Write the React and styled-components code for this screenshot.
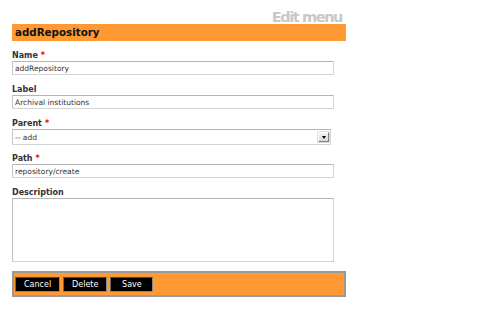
import React from "react";
import styled, { createGlobalStyle } from "styled-components";

const Global = createGlobalStyle`
  html, body { margin: 0; padding: 0; background: #fff; }
  body { font-family: "DejaVu Sans", Verdana, sans-serif; color: #333; }
`;

const Page = styled.div`
  width: 334px;
  margin-left: 12px;
  padding-top: 10px;
`;

const PageTitle = styled.div`
  font-family: "DejaVu Sans", sans-serif;
  font-weight: bold;
  font-size: 14.5px;
  line-height: 14px;
  letter-spacing: -1.4px;
  color: #c8c8c8;
  text-align: right;
  padding-right: 4px;
`;

const TitleBar = styled.h1`
  margin: 0;
  height: 17px;
  background: #ff9933;
  font-size: 10.3px;
  line-height: 17px;
  font-weight: bold;
  color: #111;
  padding-left: 3px;
`;

const Form = styled.form`
  display: flex;
  flex-direction: column;
  padding-top: 9px;
`;

const Field = styled.div`
  display: flex;
  flex-direction: column;
  align-items: flex-start;
  margin-bottom: ${(p) => p.$gap || 9}px;
`;

const Label = styled.label`
  font-size: 8px;
  line-height: 11px;
  height: 11px;
  font-weight: bold;
  color: #333;
`;

const Req = styled.span`
  color: #e00;
  margin-left: 3px;
`;

const controlBorder = `
  border: 1px solid #d4d4d4;
  border-top-color: #b4b4b4;
  border-left-color: #c4c4c4;
`;

const Input = styled.input`
  box-sizing: border-box;
  width: 322px;
  height: 14px;
  margin: 0;
  ${controlBorder}
  padding: 0 2px;
  font-family: "DejaVu Sans", sans-serif;
  font-size: 7.5px;
  color: #333;
  background: #fff;
  outline: none;
`;

const SelectBox = styled.div`
  box-sizing: border-box;
  width: 319px;
  height: 16px;
  ${controlBorder}
  display: flex;
  align-items: center;
  justify-content: space-between;
  padding: 0 1px 0 2px;
  font-size: 7.5px;
  color: #333;
  background: #fff;
`;

const DropButton = styled.span`
  box-sizing: border-box;
  width: 11px;
  height: 10px;
  display: flex;
  align-items: center;
  justify-content: center;
  background: linear-gradient(#f4f4f4, #d8d8d8);
  border: 1px solid;
  border-color: #fff #808080 #808080 #fff;
  box-shadow: 0 0 0 0.5px #bbb;
`;

const Arrow = styled.span`
  width: 0;
  height: 0;
  border-left: 2.5px solid transparent;
  border-right: 2.5px solid transparent;
  border-top: 3px solid #000;
  margin-top: 1px;
`;

const TextArea = styled.textarea`
  box-sizing: border-box;
  width: 322px;
  height: 64px;
  margin: 0;
  ${controlBorder}
  resize: none;
  padding: 2px;
  font-family: "DejaVu Sans", sans-serif;
  font-size: 7.5px;
  outline: none;
  display: block;
`;

const ButtonBar = styled.div`
  box-sizing: border-box;
  width: 334px;
  height: 26px;
  background: #ff9933;
  border: 2px solid #999;
  display: flex;
  align-items: center;
  gap: 3px;
  padding-left: 1px;
`;

const Button = styled.button`
  box-sizing: border-box;
  height: 15px;
  min-width: 43px;
  padding: 0 8px;
  margin: 0;
  background: #000;
  color: #fff;
  border: 1px solid;
  border-color: #444 #8a8a8a #8a8a8a #666;
  font-family: "DejaVu Sans", sans-serif;
  font-size: 8px;
  line-height: 13px;
  cursor: pointer;
`;

export default function App() {
  return (
    <>
      <Global />
      <Page>
        <PageTitle>Edit menu</PageTitle>
        <TitleBar>addRepository</TitleBar>
        <Form onSubmit={(e) => e.preventDefault()}>
          <Field>
            <Label>Name<Req>*</Req></Label>
            <Input defaultValue="addRepository" />
          </Field>
          <Field>
            <Label>Label</Label>
            <Input defaultValue="Archival institutions" />
          </Field>
          <Field $gap={8}>
            <Label>Parent<Req>*</Req></Label>
            <SelectBox>
              <span>-- add</span>
              <DropButton><Arrow /></DropButton>
            </SelectBox>
          </Field>
          <Field>
            <Label>Path<Req>*</Req></Label>
            <Input defaultValue="repository/create" />
          </Field>
          <Field>
            <Label>Description</Label>
            <TextArea />
          </Field>
          <ButtonBar>
            <Button type="button">Cancel</Button>
            <Button type="button">Delete</Button>
            <Button type="submit">Save</Button>
          </ButtonBar>
        </Form>
      </Page>
    </>
  );
}
